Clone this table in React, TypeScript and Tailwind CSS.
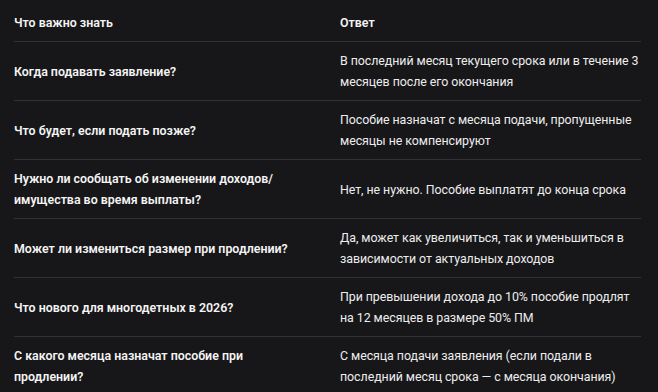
import React from 'react';

type Row = { q: string; a: string };

const rows: Row[] = [
  {
    q: 'Когда подавать заявление?',
    a: 'В последний месяц текущего срока или в течение 3 месяцев после его окончания',
  },
  {
    q: 'Что будет, если подать позже?',
    a: 'Пособие назначат с месяца подачи, пропущенные месяцы не компенсируют',
  },
  {
    q: 'Нужно ли сообщать об изменении доходов/имущества во время выплаты?',
    a: 'Нет, не нужно. Пособие выплатят до конца срока',
  },
  {
    q: 'Может ли измениться размер при продлении?',
    a: 'Да, может как увеличиться, так и уменьшиться в зависимости от актуальных доходов',
  },
  {
    q: 'Что нового для многодетных в 2026?',
    a: 'При превышении дохода до 10% пособие продлят на 12 месяцев в размере 50% ПМ',
  },
  {
    q: 'С какого месяца назначат пособие при продлении?',
    a: 'С месяца подачи заявления (если подали в последний месяц срока — с месяца окончания)',
  },
];

export default function App() {
  return (
    <div
      className="min-h-screen w-full bg-[#171719] pl-[14px] text-[12.4px] leading-[21px] text-[#ededed]"
      style={{ fontFamily: 'Roboto, "Noto Sans", sans-serif' }}
    >
      <table className="w-[627px] table-fixed border-collapse">
        <colgroup>
          <col className="w-[314px]" />
          <col className="w-[313px]" />
        </colgroup>
        <thead>
          <tr className="border-b border-[#323234]">
            <th className="pt-3 pb-2 pr-6 text-left align-top font-semibold text-[#f4f4f4]">
              Что важно знать
            </th>
            <th className="pt-3 pb-2 pl-3 text-left align-top font-semibold text-[#f4f4f4]">
              Ответ
            </th>
          </tr>
        </thead>
        <tbody>
          {rows.map((r, i) => (
            <tr key={i} className={i < rows.length - 1 ? 'border-b border-[#323234]' : ''}>
              <td className="py-2 pr-6 align-middle font-semibold text-[#f4f4f4]">{r.q}</td>
              <td className="py-2 pl-3 align-middle tracking-[-0.06px]">{r.a}</td>
            </tr>
          ))}
        </tbody>
      </table>
    </div>
  );
}
